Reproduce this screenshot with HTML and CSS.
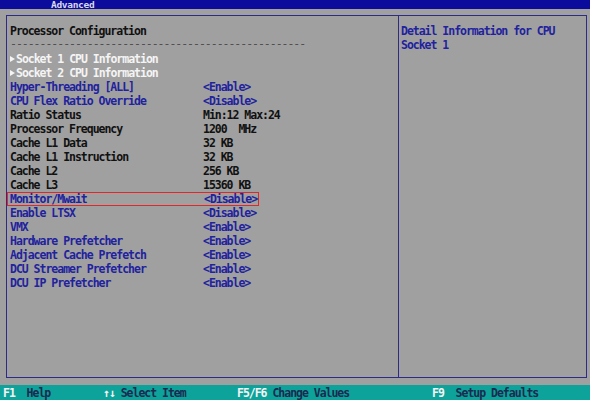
FILE: index.html
```html
<!DOCTYPE html>
<html>
<head>
<meta charset="utf-8">
<link rel="stylesheet" href="styles.css">
</head>
<body>
<div class="screen">
  <div class="topbar"><span class="tab">Advanced</span></div>
  <div class="main">
    <div class="left">
      <div class="row title">Processor Configuration</div>
      <div class="row dashes">--------------------------------------------------</div>
      <div class="row sub"><span class="tri"></span><span>Socket 1 CPU Information</span></div>
      <div class="row sub"><span class="tri"></span><span>Socket 2 CPU Information</span></div>
      <div class="row opt"><span>Hyper-Threading [ALL]</span><span>&lt;Enable&gt;</span></div>
      <div class="row opt"><span>CPU Flex Ratio Override</span><span>&lt;Disable&gt;</span></div>
      <div class="row info"><span>Ratio Status</span><span>Min:12 Max:24</span></div>
      <div class="row info"><span>Processor Frequency</span><span>1200  MHz</span></div>
      <div class="row info"><span>Cache L1 Data</span><span>32 KB</span></div>
      <div class="row info"><span>Cache L1 Instruction</span><span>32 KB</span></div>
      <div class="row info"><span>Cache L2</span><span>256 KB</span></div>
      <div class="row info"><span>Cache L3</span><span>15360 KB</span></div>
      <div class="row opt selected"><span>Monitor/Mwait</span><span>&lt;Disable&gt;</span></div>
      <div class="row opt"><span>Enable LTSX</span><span>&lt;Disable&gt;</span></div>
      <div class="row opt"><span>VMX</span><span>&lt;Enable&gt;</span></div>
      <div class="row opt"><span>Hardware Prefetcher</span><span>&lt;Enable&gt;</span></div>
      <div class="row opt"><span>Adjacent Cache Prefetch</span><span>&lt;Enable&gt;</span></div>
      <div class="row opt"><span>DCU Streamer Prefetcher</span><span>&lt;Enable&gt;</span></div>
      <div class="row opt"><span>DCU IP Prefetcher</span><span>&lt;Enable&gt;</span></div>
    </div>
    <div class="right">
      <div class="help">Detail Information for CPU<br>Socket 1</div>
    </div>
  </div>
  <div class="footer">
    <span class="fi"><b>F1</b>  Help</span>
    <span class="fi"><b>↑↓</b> Select Item</span>
    <span class="fi"><b>F5/F6</b> Change Values</span>
    <span class="fi"><b>F9</b>  Setup Defaults</span>
  </div>
</div>
</body>
</html>
```
FILE: styles.css
```css
html, body { margin: 0; padding: 0; background: #ffffff; }
.screen {
  width: 590px;
  height: 400px;
  background: #a0a0a0;
  display: flex;
  flex-direction: column;
  font-family: "DejaVu Sans Mono", "Liberation Mono", monospace;
  font-size: 11.5px;
  font-weight: bold;
  letter-spacing: -1.02px;
  overflow: hidden;
}
.topbar {
  height: 9px;
  background: #0b0b9c;
  position: relative;
  overflow: hidden;
  flex: none;
}
.tab {
  position: absolute;
  left: 51px;
  top: 0;
  line-height: 9px;
  font-size: 9.5px;
  letter-spacing: -0.3px;
  color: #d8d8f0;
  white-space: pre;
}
.main {
  margin: 6px 3px 0 6px;
  height: 361px;
  border: 1px solid #2c2c88;
  display: grid;
  grid-template-columns: 392px 1fr;
  flex: none;
}
.left {
  padding: 8px 0 0 3px;
  border-right: 1px solid #2c2c88;
}
.row {
  height: 14px;
  line-height: 14px;
  display: grid;
  grid-template-columns: 193px auto;
  white-space: pre;
}
.title { color: #111; display: block; }
.dashes { color: #505050; display: block; font-weight: normal; line-height: 12px; }
.sub { color: #f4f4f4; display: flex; align-items: center; }
.tri {
  width: 0; height: 0;
  border-left: 5px solid #f4f4f4;
  border-top: 3px solid transparent;
  border-bottom: 3px solid transparent;
  margin-right: 1px;
}
.opt { color: #22229e; }
.info { color: #111; }
.selected {
  margin-left: -3px;
  padding-left: 2px;
  width: 248px;
  border: 1px solid #e02828;
  height: 12px;
  line-height: 12px;
  grid-template-columns: 194px auto;
}
.right { padding: 8px 0 0 2px; }
.help { color: #22229e; line-height: 14px; white-space: pre; }
.footer {
  margin-top: 7px;
  height: 15px;
  background: #0ea39a;
  display: grid;
  grid-template-columns: 100px 134px 195px auto;
  padding-left: 3px;
  line-height: 16px;
  color: #1a2a50;
  flex: none;
}
.fi { white-space: pre; }
.fi b { color: #f4f4f4; font-weight: bold; }
```
